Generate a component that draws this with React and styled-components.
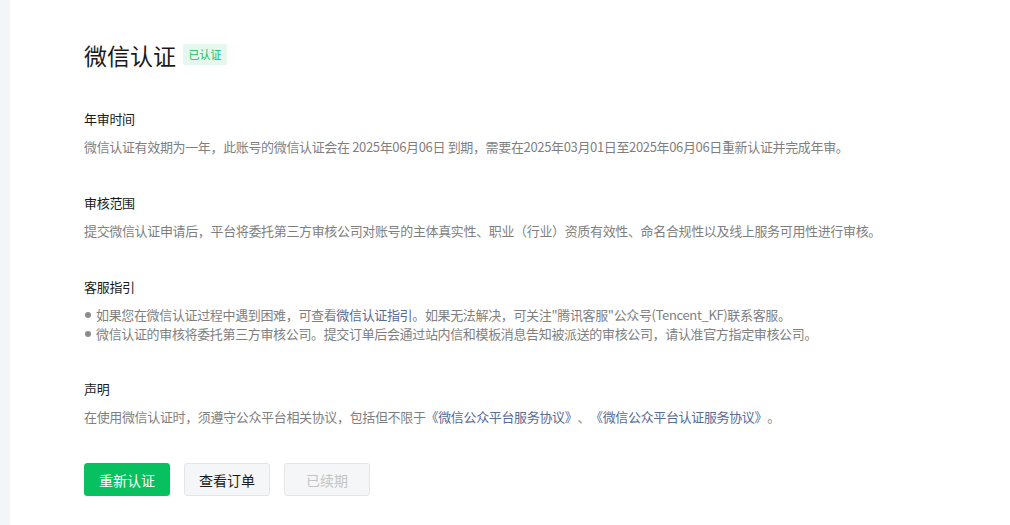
import React from "react";
import styled, { createGlobalStyle } from "styled-components";

const Global = createGlobalStyle`
  html, body { margin: 0; padding: 0; background: #fff; }
  body {
    font-family: "Noto Sans CJK SC", "Noto Sans", sans-serif;
    text-spacing-trim: space-all;
  }
  * { box-sizing: border-box; }
`;

const Shell = styled.div`
  display: flex;
  min-height: 525px;
`;

const SideStrip = styled.div`
  width: 10px;
  flex: none;
  background: #f4f5f7;
`;

const Main = styled.main`
  flex: 1;
  padding: 39px 0 0 74px;
`;

const TitleRow = styled.div`
  display: flex;
  align-items: center;
  gap: 7px;
`;

const Title = styled.h1`
  margin: 0;
  font-size: 23px;
  line-height: 32px;
  font-weight: 400;
  color: #1a1a1a;
`;

const Badge = styled.span`
  display: inline-flex;
  align-items: center;
  justify-content: center;
  height: 21px;
  width: 44px;
  border-radius: 2px;
  background: #e6f8ee;
  color: #07c160;
  font-size: 11px;
  margin-top: -2px;
`;

const Sections = styled.div`
  display: flex;
  flex-direction: column;
  gap: 36px;
  margin-top: 38px;
`;

const Section = styled.section`
  display: flex;
  flex-direction: column;
  gap: 8px;
`;

const Heading = styled.h2`
  margin: 0;
  font-size: 13px;
  line-height: 20px;
  font-weight: 400;
  letter-spacing: -0.3px;
  color: #1a1a1a;
`;

const Text = styled.p`
  margin: 0;
  font-size: 13px;
  line-height: 20px;
  letter-spacing: -0.35px;
  color: #7f7f7f;
`;

const List = styled.ul`
  margin: 0;
  padding: 0;
  list-style: none;
  display: flex;
  flex-direction: column;
`;

const Item = styled.li`
  display: flex;
  align-items: center;
  font-size: 13px;
  line-height: 19px;
  letter-spacing: -0.35px;
  color: #7f7f7f;
  &::before {
    content: "";
    flex: none;
    width: 6px;
    height: 6px;
    border-radius: 50%;
    background: #8c8c8c;
    margin: 0 5px 0 1px;
  }
`;

const Link = styled.a`
  color: #576b95;
  text-decoration: none;
`;

const Buttons = styled.div`
  display: flex;
  gap: 14px;
  margin-top: 36px;
`;

const Button = styled.button`
  width: 86px;
  height: 33px;
  border-radius: 3px;
  font-family: inherit;
  font-size: 14px;
  padding: 0;
  cursor: pointer;
  border: 1px solid
    ${(p) => (p.$variant === "primary" ? "#07c160" : "#e4e5e7")};
  background: ${(p) => (p.$variant === "primary" ? "#07c160" : "#f5f6f7")};
  color: ${(p) =>
    p.$variant === "primary" ? "#fff" : p.$variant === "disabled" ? "#c4c4c4" : "#1a1a1a"};
  &:disabled { cursor: default; }
`;

export default function App() {
  return (
    <>
      <Global />
      <Shell>
        <SideStrip />
        <Main>
          <TitleRow>
            <Title>微信认证</Title>
            <Badge>已认证</Badge>
          </TitleRow>
          <Sections>
            <Section>
              <Heading>年审时间</Heading>
              <Text>
                微信认证有效期为一年，此账号的微信认证会在 2025年06月06日 到期，需要在2025年03月01日至2025年06月06日重新认证并完成年审。
              </Text>
            </Section>
            <Section>
              <Heading>审核范围</Heading>
              <Text>
                提交微信认证申请后，平台将委托第三方审核公司对账号的主体真实性、职业（行业）资质有效性、命名合规性以及线上服务可用性进行审核。
              </Text>
            </Section>
            <Section>
              <Heading>客服指引</Heading>
              <List>
                <Item>
                  <span>
                    如果您在微信认证过程中遇到困难，可查看<Link href="#">微信认证指引</Link>。如果无法解决，可关注"腾讯客服"公众号(Tencent_KF)联系客服。
                  </span>
                </Item>
                <Item>
                  <span>
                    微信认证的审核将委托第三方审核公司。提交订单后会通过站内信和模板消息告知被派送的审核公司，请认准官方指定审核公司。
                  </span>
                </Item>
              </List>
            </Section>
            <Section>
              <Heading>声明</Heading>
              <Text>
                在使用微信认证时，须遵守公众平台相关协议，包括但不限于
                <Link href="#">《微信公众平台服务协议》</Link>、
                <Link href="#">《微信公众平台认证服务协议》</Link>。
              </Text>
            </Section>
          </Sections>
          <Buttons>
            <Button $variant="primary">重新认证</Button>
            <Button>查看订单</Button>
            <Button $variant="disabled" disabled>
              已续期
            </Button>
          </Buttons>
        </Main>
      </Shell>
    </>
  );
}
